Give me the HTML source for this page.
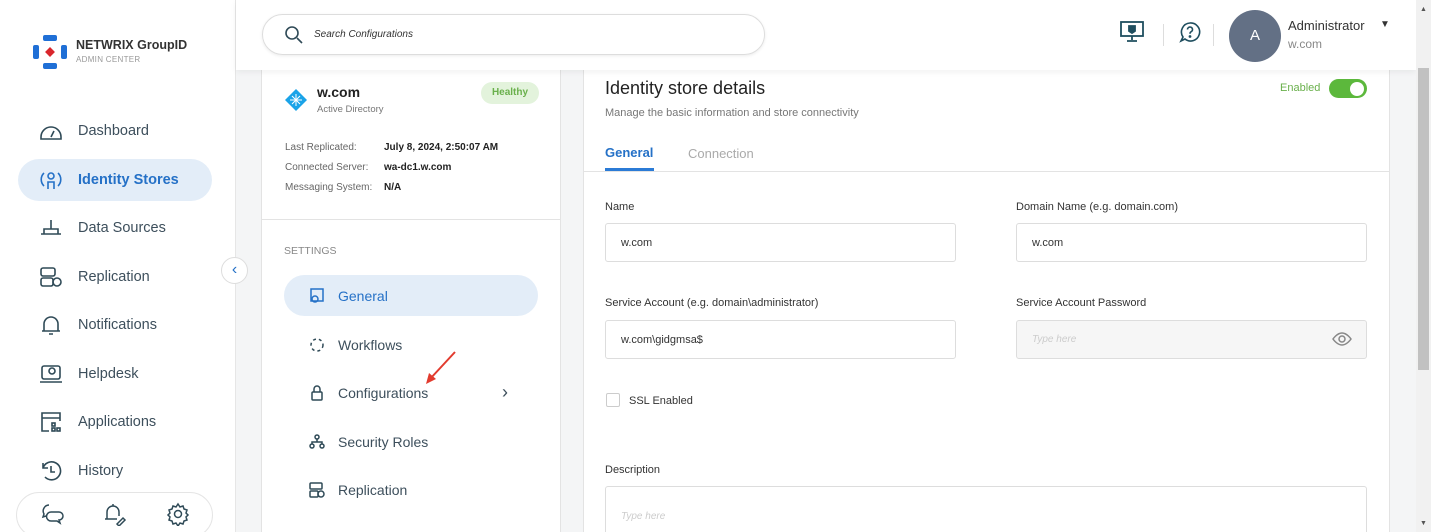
<!DOCTYPE html>
<html><head><meta charset="utf-8"><style>
*{box-sizing:border-box;margin:0;padding:0}
html{overflow:hidden;width:1431px;height:532px}
body{width:1431px;height:532px;overflow:hidden;font-family:"Liberation Sans",sans-serif;background:#f4f5f6;position:relative;color:#333}
.abs{position:absolute}
.side{left:0;top:0;width:236px;height:532px;background:#fff;border-right:1px solid #e6e6e6}
.nav{position:absolute;left:18px;width:194px;height:42px;display:flex;align-items:center;padding-left:20px;font-size:14.5px;color:#3d4f5c}
.nav svg{width:26px;height:26px;margin-right:14px;fill:none;stroke:#2f4a57;stroke-width:1.6}
.nav.act{background:#e3edf8;border-radius:21px;color:#2571c7;font-weight:bold}
.nav.act svg{stroke:#2571c7}
.hdr{left:236px;top:0;width:1180px;height:70px;background:#fff;box-shadow:0 2px 6px rgba(0,0,0,.06);z-index:5}
.card{background:#fff;border:1px solid #e3e3e3}
.lbl{font-size:11px;color:#333}
.inp{position:absolute;height:39px;border:1px solid #ddd;border-radius:3px;font-size:11px;padding:0 15px;display:flex;align-items:center;color:#333}
.sn{position:absolute;left:22px;width:254px;height:41px;display:flex;align-items:center;padding-left:24px;font-size:14px;color:#3d4f5c}
.sn svg{width:18px;height:18px;margin-right:12px;fill:none;stroke:#2f4a57;stroke-width:1.5}
</style></head><body>
<div class="abs side">
 <svg class="abs" style="left:32px;top:34px" width="36" height="36" viewBox="0 0 36 36"><g fill="#1f6fd6"><rect x="11" y="1" width="14" height="6" rx="2"/><rect x="11" y="29" width="14" height="6" rx="2"/><rect x="1" y="11" width="6" height="14" rx="2"/><rect x="29" y="11" width="6" height="14" rx="2"/></g><rect x="14.5" y="14.5" width="7" height="7" fill="#d9262c" transform="rotate(45 18 18)"/></svg>
 <div class="abs" style="left:76px;top:38px;font-size:12.5px;font-weight:bold;color:#333">NETWRIX GroupID</div>
 <div class="abs" style="left:76px;top:55px;font-size:8px;color:#999;letter-spacing:.3px">ADMIN CENTER</div>
 <div class="nav" style="top:110px"><svg viewBox="0 0 26 26"><path d="M3 19a10 10 0 0 1 20 0v2H3z"/><path d="M13 19l3-6"/></svg>Dashboard</div>
 <div class="nav act" style="top:159px"><svg viewBox="0 0 26 26"><circle cx="13" cy="9" r="3"/><path d="M10 22v-7h6v7M6 6a9 9 0 0 0 0 13M20 6a9 9 0 0 1 0 13"/></svg>Identity Stores</div>
 <div class="nav" style="top:207px"><svg viewBox="0 0 26 26"><path d="M3 19h20M6 19v-5h14v5M13 14V5"/></svg>Data Sources</div>
 <div class="nav" style="top:256px"><svg viewBox="0 0 26 26"><rect x="3" y="4" width="14" height="8" rx="2"/><rect x="3" y="14" width="12" height="8" rx="2"/><circle cx="19" cy="18" r="4"/></svg>Replication</div>
 <div class="nav" style="top:304px"><svg viewBox="0 0 26 26"><path d="M6 19V12a7 7 0 0 1 14 0v7zM4 19h18M11 22h4"/></svg>Notifications</div>
 <div class="nav" style="top:353px"><svg viewBox="0 0 26 26"><rect x="4" y="5" width="18" height="13" rx="2"/><path d="M2 21h22"/><circle cx="14" cy="10" r="3"/></svg>Helpdesk</div>
 <div class="nav" style="top:401px"><svg viewBox="0 0 26 26"><path d="M11 22H4V4h18v8M4 9h18"/><rect x="14" y="14" width="3" height="3"/><rect x="19" y="19" width="3" height="3"/><rect x="14" y="19" width="3" height="3"/></svg>Applications</div>
 <div class="nav" style="top:450px"><svg viewBox="0 0 26 26"><path d="M5 10a9 9 0 1 1 2 9M5 5v5h5M13 8v6h4"/></svg>History</div>
 <div class="abs" style="left:16px;top:492px;width:197px;height:46px;border:1px solid #e5e5e5;border-radius:23px"></div>
 <svg class="abs" style="left:40px;top:502px" width="24" height="24" viewBox="0 0 24 24" fill="none" stroke="#2f4a57" stroke-width="1.5"><path d="M9 3a6 6 0 0 0-5 9l-1 3 3-1M11 10h8a3 3 0 0 1 0 8l1 3-3-2h-6a3 3 0 0 1 0-9z"/></svg>
 <svg class="abs" style="left:103px;top:502px" width="24" height="24" viewBox="0 0 24 24" fill="none" stroke="#2f4a57" stroke-width="1.5"><path d="M4 17V10a6 6 0 0 1 12 0v4M2 17h12M10 2v2M14 22l6-6 2 2-6 6z"/></svg>
 <svg class="abs" style="left:166px;top:502px" width="24" height="24" viewBox="0 0 24 24" fill="none" stroke="#2f4a57" stroke-width="1.5"><circle cx="12" cy="12" r="3.5"/><path d="M12 2l2 3 3-1 1 3 3 1-1 3 2 2-2 2 1 3-3 1-1 3-3-1-2 3-2-3-3 1-1-3-3-1 1-3-2-2 2-2-1-3 3-1 1-3 3 1z"/></svg>
</div>
<div class="abs" style="left:221px;top:257px;width:27px;height:27px;border-radius:50%;background:#fff;border:1px solid #ddd;z-index:6;text-align:center;line-height:24px;color:#2571c7;font-size:16px">‹</div>
<div class="abs hdr">
 <div class="abs" style="left:26px;top:14px;width:503px;height:41px;border:1px solid #ddd;border-radius:21px;box-shadow:0 1px 3px rgba(0,0,0,.08)"></div>
 <svg class="abs" style="left:48px;top:25px" width="20" height="20" viewBox="0 0 20 20" fill="none" stroke="#2f4a57" stroke-width="1.6"><circle cx="8" cy="8" r="6"/><path d="M13 13l5 5"/></svg>
 <div class="abs" style="left:78px;top:29px;font-size:10px;font-style:italic;color:#333">Search Configurations</div>
 <svg class="abs" style="left:884px;top:20px" width="24" height="22" viewBox="0 0 24 22" fill="none" stroke="#1f4e5f" stroke-width="1.8"><rect x="1" y="2" width="22" height="14"/><path d="M12 16v4M7 21h10"/><path d="M9 6h6v5l-3 2-3-2z" fill="#1f4e5f"/></svg>
 <div class="abs" style="left:927px;top:24px;width:1px;height:22px;background:#ddd"></div>
 <svg class="abs" style="left:943px;top:21px" width="22" height="22" viewBox="0 0 22 22" fill="none" stroke="#1f4e5f" stroke-width="1.6"><path d="M11 2a9 9 0 1 1-5 16l-4 2 2-4A9 9 0 0 1 11 2z"/><path d="M8.5 8.5a2.5 2.5 0 1 1 3.5 2.3c-1 .5-1 1-1 2"/><circle cx="11" cy="15.5" r=".6" fill="#1f4e5f"/></svg>
 <div class="abs" style="left:977px;top:24px;width:1px;height:22px;background:#ddd"></div>
 <div class="abs" style="left:993px;top:10px;width:52px;height:52px;border-radius:50%;background:#637085;color:#fff;font-size:15px;text-align:center;line-height:52px">A</div>
 <div class="abs" style="left:1052px;top:18px;font-size:13px;color:#333">Administrator</div>
 <div class="abs" style="left:1144px;top:19px;font-size:10px;color:#333">▼</div>
 <div class="abs" style="left:1052px;top:37px;font-size:12px;color:#888">w.com</div>
</div>
<div class="abs card" style="left:261px;top:60px;width:300px;height:472px;border-top:none;border-bottom:none">
 <svg class="abs" style="left:22px;top:28px" width="24" height="24" viewBox="0 0 24 24"><path d="M12 1l11 11-11 11L1 12z" fill="#1aa3e8"/><path d="M12 6v12M6 12h12M8 8l8 8M16 8l-8 8" stroke="#fff" stroke-width="1"/></svg>
 <div class="abs" style="left:55px;top:24px;font-size:14px;font-weight:bold;color:#222">w.com</div>
 <div class="abs" style="left:55px;top:44px;font-size:9.5px;color:#777">Active Directory</div>
 <div class="abs" style="left:219px;top:22px;width:58px;height:22px;border-radius:11px;background:#e3f3dc;color:#6ab04c;font-size:10px;text-align:center;line-height:22px;font-weight:bold">Healthy</div>
 <div class="abs" style="left:23px;top:78px;font-size:10px;color:#666;line-height:20px">Last Replicated:<br>Connected Server:<br>Messaging System:</div>
 <div class="abs" style="left:122px;top:78px;font-size:10px;color:#222;line-height:20px;font-weight:bold">July 8, 2024, 2:50:07 AM<br>wa-dc1.w.com<br>N/A</div>
 <div class="abs" style="left:0;top:159px;width:299px;height:1px;background:#e3e3e3"></div>
 <div class="abs" style="left:22px;top:185px;font-size:10.5px;color:#888">SETTINGS</div>
 <div class="sn" style="top:215px;background:#e3edf8;border-radius:21px;color:#2571c7"><svg viewBox="0 0 18 18" style="stroke:#2571c7"><rect x="3" y="2" width="12" height="12"/><circle cx="7" cy="12" r="3"/></svg>General</div>
 <div class="sn" style="top:264px"><svg viewBox="0 0 18 18"><circle cx="9" cy="9" r="6" stroke-dasharray="3 3"/></svg>Workflows</div>
 <div class="sn" style="top:312px"><svg viewBox="0 0 18 18"><rect x="4" y="8" width="10" height="8" rx="1"/><path d="M6 8V5a3 3 0 0 1 6 0v3"/></svg>Configurations<span style="position:absolute;left:218px;font-size:18px">›</span></div>
 <div class="sn" style="top:361px"><svg viewBox="0 0 18 18"><circle cx="9" cy="4" r="2"/><circle cx="4" cy="13" r="2"/><circle cx="14" cy="13" r="2"/><path d="M9 6v3M4 11V9h10v2"/></svg>Security Roles</div>
 <div class="sn" style="top:409px"><svg viewBox="0 0 18 18"><rect x="2" y="2" width="12" height="6" rx="1"/><rect x="2" y="10" width="8" height="6" rx="1"/><circle cx="13" cy="13" r="3"/></svg>Replication</div>
</div>
<svg class="abs" style="left:420px;top:348px" width="40" height="40" viewBox="0 0 40 40"><path d="M35 4L10 31" stroke="#e23b2e" stroke-width="2"/><path d="M6 36l3-11 7 6z" fill="#e23b2e"/></svg>
<div class="abs card" style="left:583px;top:60px;width:807px;height:472px;border-top:none;border-bottom:none">
 <div class="abs" style="left:21px;top:18px;font-size:18px;color:#222">Identity store details</div>
 <div class="abs" style="left:21px;top:47px;font-size:11px;color:#777">Manage the basic information and store connectivity</div>
 <div class="abs" style="left:696px;top:22px;font-size:11px;color:#6ab04c">Enabled</div>
 <div class="abs" style="left:745px;top:19px;width:38px;height:19px;border-radius:10px;background:#5cb83c"><div style="position:absolute;right:3px;top:2.5px;width:14px;height:14px;border-radius:50%;background:#fff"></div></div>
 <div class="abs" style="left:21px;top:85px;font-size:13px;font-weight:bold;color:#2571c7">General</div>
 <div class="abs" style="left:21px;top:108px;width:49px;height:3px;background:#2b7bd6"></div>
 <div class="abs" style="left:104px;top:86px;font-size:13px;color:#aaa">Connection</div>
 <div class="abs" style="left:0;top:111px;width:806px;height:1px;background:#e3e3e3"></div>
 <div class="abs lbl" style="left:21px;top:141px">Name</div>
 <div class="inp" style="left:21px;top:163px;width:351px">w.com</div>
 <div class="abs lbl" style="left:432px;top:141px">Domain Name (e.g. domain.com)</div>
 <div class="inp" style="left:432px;top:163px;width:351px">w.com</div>
 <div class="abs lbl" style="left:21px;top:237px">Service Account (e.g. domain\administrator)</div>
 <div class="inp" style="left:21px;top:260px;width:351px">w.com\gidgmsa$</div>
 <div class="abs lbl" style="left:432px;top:237px">Service Account Password</div>
 <div class="inp" style="left:432px;top:260px;width:351px;background:#f6f6f6;color:#ccc;font-style:italic;font-size:10px">Type here</div>
 <svg class="abs" style="left:748px;top:271px" width="20" height="16" viewBox="0 0 20 16" fill="none" stroke="#888" stroke-width="1.5"><path d="M1 8s4-6 9-6 9 6 9 6-4 6-9 6-9-6-9-6z"/><circle cx="10" cy="8" r="3"/></svg>
 <div class="abs" style="left:22px;top:333px;width:14px;height:14px;border:1px solid #ccc;border-radius:2px"></div>
 <div class="abs lbl" style="left:45px;top:335px">SSL Enabled</div>
 <div class="abs lbl" style="left:21px;top:404px">Description</div>
 <div class="inp" style="left:21px;top:426px;width:762px;height:60px;color:#ccc;font-style:italic;font-size:10px">Type here</div>
</div>
<div class="abs" style="left:1416px;top:0;width:15px;height:532px;background:#f1f1f1;z-index:7"><div style="position:absolute;left:2px;top:68px;width:11px;height:302px;background:#c1c1c1"></div><div style="position:absolute;left:4px;top:6px;font-size:7px;color:#555">▲</div><div style="position:absolute;left:4px;top:520px;font-size:7px;color:#555">▼</div></div>
</body></html>
